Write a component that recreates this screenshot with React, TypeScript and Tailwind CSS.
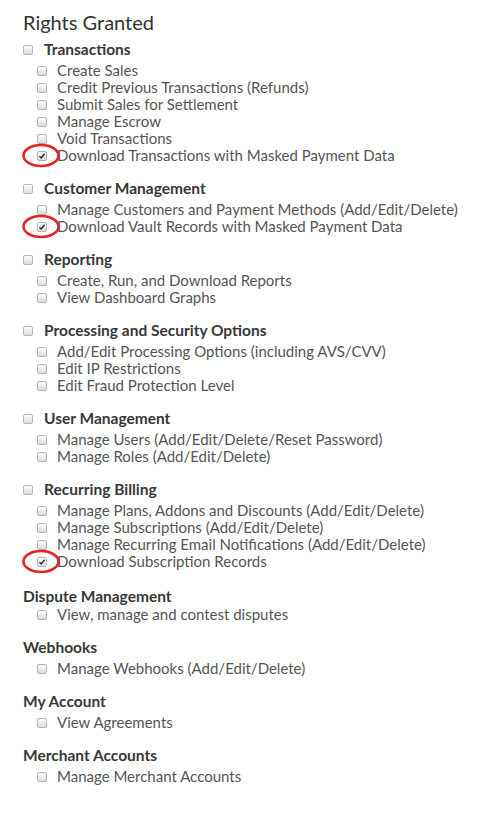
import React from 'react';

type Item = { label: string; checked?: boolean };
type Group = { title: string; box: boolean; items: Item[] };

const groups: Group[] = [
    {
        title: 'Transactions',
        box: true,
        items: [
            { label: 'Create Sales' },
            { label: 'Credit Previous Transactions (Refunds)' },
            { label: 'Submit Sales for Settlement' },
            { label: 'Manage Escrow' },
            { label: 'Void Transactions' },
            { label: 'Download Transactions with Masked Payment Data', checked: true },
        ],
    },
    {
        title: 'Customer Management',
        box: true,
        items: [
            { label: 'Manage Customers and Payment Methods (Add/Edit/Delete)' },
            { label: 'Download Vault Records with Masked Payment Data', checked: true },
        ],
    },
    {
        title: 'Reporting',
        box: true,
        items: [{ label: 'Create, Run, and Download Reports' }, { label: 'View Dashboard Graphs' }],
    },
    {
        title: 'Processing and Security Options',
        box: true,
        items: [
            { label: 'Add/Edit Processing Options (including AVS/CVV)' },
            { label: 'Edit IP Restrictions' },
            { label: 'Edit Fraud Protection Level' },
        ],
    },
    {
        title: 'User Management',
        box: true,
        items: [
            { label: 'Manage Users (Add/Edit/Delete/Reset Password)' },
            { label: 'Manage Roles (Add/Edit/Delete)' },
        ],
    },
    {
        title: 'Recurring Billing',
        box: true,
        items: [
            { label: 'Manage Plans, Addons and Discounts (Add/Edit/Delete)' },
            { label: 'Manage Subscriptions (Add/Edit/Delete)' },
            { label: 'Manage Recurring Email Notifications (Add/Edit/Delete)' },
            { label: 'Download Subscription Records', checked: true },
        ],
    },
    { title: 'Dispute Management', box: false, items: [{ label: 'View, manage and contest disputes' }] },
    { title: 'Webhooks', box: false, items: [{ label: 'Manage Webhooks (Add/Edit/Delete)' }] },
    { title: 'My Account', box: false, items: [{ label: 'View Agreements' }] },
    { title: 'Merchant Accounts', box: false, items: [{ label: 'Manage Merchant Accounts' }] },
];

function Box({ checked }: { checked?: boolean }) {
    return (
        <span className="relative flex h-[10px] w-[10px] shrink-0 items-center justify-center rounded-[2px] border border-[#b4b4b4] bg-linear-to-b from-[#fdfdfd] to-[#dcdcdc]">
            {checked && (
                <svg viewBox="0 0 10 10" className="h-[8px] w-[8px]">
                    <path d="M1.8 5.2 L4 7.4 L8.2 2.2" fill="none" stroke="#2a2a2a" strokeWidth="1.8" />
                </svg>
            )}
        </span>
    );
}

function Row({ item }: { item: Item }) {
    return (
        <div className="relative flex h-[17px] items-center gap-[10px] pl-[14px]">
            <Box checked={item.checked} />
            <span className="whitespace-nowrap">{item.label}</span>
            {item.checked && (
                <svg className="pointer-events-none absolute left-[-1px] top-[-4px]" width="40" height="25" viewBox="0 0 40 25">
                    <ellipse cx="19" cy="12.5" rx="17.5" ry="10.5" fill="none" stroke="#e8231d" strokeWidth="2.6" />
                </svg>
            )}
        </div>
    );
}

export default function App() {
    return (
        <div className="min-h-[818px] w-[488px] bg-white px-[23px] pt-[10px] font-['Lato','Liberation_Sans',sans-serif] text-[15px] text-[#555]">
            <h2 className="text-[20px] leading-[24px] text-[#333]">Rights Granted</h2>
            <div className="mt-[7px] flex flex-col gap-[16px]">
                {groups.map((g, i) => (
                    <div key={g.title} className={i === 6 ? 'mt-[2px]' : ''}>
                        <div className="flex h-[17px] items-center gap-[11px] text-[15.5px] font-bold text-[#383838]">
                            {g.box && <Box />}
                            <span className="whitespace-nowrap">{g.title}</span>
                        </div>
                        <div className={`${i === 6 ? 'mt-[1px]' : 'mt-[4px]'} flex flex-col`}>
                            {g.items.map((it) => (
                                <Row key={it.label} item={it} />
                            ))}
                        </div>
                    </div>
                ))}
            </div>
        </div>
    );
}
